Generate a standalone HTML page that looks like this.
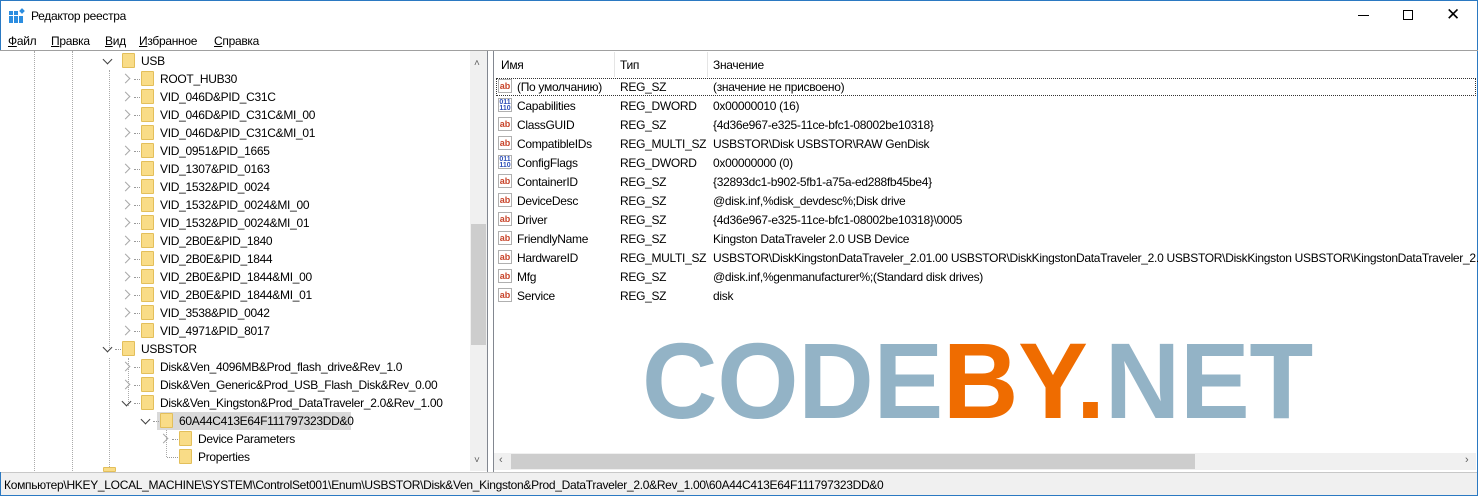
<!DOCTYPE html>
<html><head><meta charset="utf-8"><style>
*{margin:0;padding:0;box-sizing:border-box}
body{width:1478px;height:496px;overflow:hidden;background:#fff;font-family:"Liberation Sans","Noto Sans CJK SC",sans-serif;font-size:12px;color:#000;position:relative;letter-spacing:-0.3px}
.a{position:absolute;white-space:nowrap}
.f{position:absolute;width:13px;height:15px;background:#f9dc87;border:1px solid #e3bf5a;border-radius:1px}
.cv{position:absolute;width:7px;height:7px;border-right:1.5px solid #a8a8a8;border-bottom:1.5px solid #a8a8a8;transform:rotate(-45deg)}
.cd{position:absolute;width:7px;height:7px;border-right:1.5px solid #404040;border-bottom:1.5px solid #404040;transform:rotate(45deg)}
.dot{position:absolute;width:6px;border-top:1px dotted #999}
.vl{position:absolute;border-left:1px dotted #aaa}
.ic{position:absolute;width:14px;height:14px;border:1px solid #b0b0b0;background:#fff;font:bold 9px "Liberation Sans",sans-serif;line-height:12px;text-align:center;letter-spacing:0}
.ab{color:#c8442a}
.bn{color:#2d4fb8;font-size:7px;line-height:6px;padding-top:1px}
</style></head><body>
<div class="a" style="left:0;top:0;width:1478px;height:496px;border:1px solid #2b79c2"></div>
<svg class="a" style="left:9px;top:8px" width="16" height="16"><g fill="#2b8de0"><rect x="0" y="3" width="4" height="4"/><rect x="5" y="3" width="4" height="4"/><rect x="0" y="8" width="4" height="4"/><rect x="5" y="8" width="4" height="4"/><rect x="10" y="8" width="4" height="4"/><rect x="0" y="12" width="4" height="3"/><rect x="5" y="12" width="4" height="3"/><rect x="10" y="12" width="4" height="3"/><rect x="11" y="1" width="4" height="4" transform="rotate(45 13 3)"/></g></svg>
<div class="a" style="left:31px;top:9px;font-size:12px">Редактор реестра</div>
<div class="a" style="left:1358px;top:15px;width:11px;border-top:1px solid #000"></div>
<div class="a" style="left:1403px;top:10px;width:10px;height:10px;border:1px solid #000"></div>
<div class="a" style="left:1446px;top:6px;font-size:17px;line-height:17px">✕</div>
<div class="a" style="left:8px;top:34px"><u>Ф</u>айл</div>
<div class="a" style="left:51px;top:34px"><u>П</u>равка</div>
<div class="a" style="left:105px;top:34px"><u>В</u>ид</div>
<div class="a" style="left:139px;top:34px"><u>И</u>збранное</div>
<div class="a" style="left:214px;top:34px"><u>С</u>правка</div>
<div class="a" style="left:0;top:50px;width:1478px;border-top:1px solid #a0a0a0"></div>
<div class="a" style="left:0;top:51px;width:488px;height:421px;border-right:1px solid #828790;background:#fff"></div>
<div class="vl" style="left:34px;top:51px;height:420px"></div>
<div class="vl" style="left:72px;top:51px;height:420px"></div>
<div class="vl" style="left:109px;top:70px;height:280px"></div>
<div class="vl" style="left:109px;top:358px;height:113px"></div>
<div class="vl" style="left:128px;top:358px;height:48px"></div>
<div class="vl" style="left:166px;top:430px;height:27px"></div>
<div class="a" style="left:470px;top:51px;width:17px;height:420px;background:#f0f0f0"></div>
<div class="a" style="left:471px;top:224px;width:15px;height:121px;background:#cdcdcd"></div>
<div class="a" style="left:474px;top:58px;font-size:10px;color:#606060">˄</div>
<div class="a" style="left:474px;top:455px;font-size:10px;color:#606060">˅</div>
<div class="cd" style="left:104px;top:56px"></div><div class="f" style="left:122px;top:53px"></div><div class="a" style="left:141px;top:54px">USB</div>
<div class="cv" style="left:122px;top:75px"></div><div class="dot" style="left:134px;top:79px"></div><div class="f" style="left:141px;top:71px"></div><div class="a" style="left:160px;top:72px">ROOT_HUB30</div>
<div class="cv" style="left:122px;top:93px"></div><div class="dot" style="left:134px;top:97px"></div><div class="f" style="left:141px;top:89px"></div><div class="a" style="left:160px;top:90px">VID_046D&amp;PID_C31C</div>
<div class="cv" style="left:122px;top:111px"></div><div class="dot" style="left:134px;top:115px"></div><div class="f" style="left:141px;top:107px"></div><div class="a" style="left:160px;top:108px">VID_046D&amp;PID_C31C&amp;MI_00</div>
<div class="cv" style="left:122px;top:129px"></div><div class="dot" style="left:134px;top:133px"></div><div class="f" style="left:141px;top:125px"></div><div class="a" style="left:160px;top:126px">VID_046D&amp;PID_C31C&amp;MI_01</div>
<div class="cv" style="left:122px;top:147px"></div><div class="dot" style="left:134px;top:151px"></div><div class="f" style="left:141px;top:143px"></div><div class="a" style="left:160px;top:144px">VID_0951&amp;PID_1665</div>
<div class="cv" style="left:122px;top:165px"></div><div class="dot" style="left:134px;top:169px"></div><div class="f" style="left:141px;top:161px"></div><div class="a" style="left:160px;top:162px">VID_1307&amp;PID_0163</div>
<div class="cv" style="left:122px;top:183px"></div><div class="dot" style="left:134px;top:187px"></div><div class="f" style="left:141px;top:179px"></div><div class="a" style="left:160px;top:180px">VID_1532&amp;PID_0024</div>
<div class="cv" style="left:122px;top:201px"></div><div class="dot" style="left:134px;top:205px"></div><div class="f" style="left:141px;top:197px"></div><div class="a" style="left:160px;top:198px">VID_1532&amp;PID_0024&amp;MI_00</div>
<div class="cv" style="left:122px;top:219px"></div><div class="dot" style="left:134px;top:223px"></div><div class="f" style="left:141px;top:215px"></div><div class="a" style="left:160px;top:216px">VID_1532&amp;PID_0024&amp;MI_01</div>
<div class="cv" style="left:122px;top:237px"></div><div class="dot" style="left:134px;top:241px"></div><div class="f" style="left:141px;top:233px"></div><div class="a" style="left:160px;top:234px">VID_2B0E&amp;PID_1840</div>
<div class="cv" style="left:122px;top:255px"></div><div class="dot" style="left:134px;top:259px"></div><div class="f" style="left:141px;top:251px"></div><div class="a" style="left:160px;top:252px">VID_2B0E&amp;PID_1844</div>
<div class="cv" style="left:122px;top:273px"></div><div class="dot" style="left:134px;top:277px"></div><div class="f" style="left:141px;top:269px"></div><div class="a" style="left:160px;top:270px">VID_2B0E&amp;PID_1844&amp;MI_00</div>
<div class="cv" style="left:122px;top:291px"></div><div class="dot" style="left:134px;top:295px"></div><div class="f" style="left:141px;top:287px"></div><div class="a" style="left:160px;top:288px">VID_2B0E&amp;PID_1844&amp;MI_01</div>
<div class="cv" style="left:122px;top:309px"></div><div class="dot" style="left:134px;top:313px"></div><div class="f" style="left:141px;top:305px"></div><div class="a" style="left:160px;top:306px">VID_3538&amp;PID_0042</div>
<div class="cv" style="left:122px;top:327px"></div><div class="dot" style="left:134px;top:331px"></div><div class="f" style="left:141px;top:323px"></div><div class="a" style="left:160px;top:324px">VID_4971&amp;PID_8017</div>
<div class="cd" style="left:104px;top:344px"></div><div class="dot" style="left:115px;top:349px"></div><div class="f" style="left:122px;top:341px"></div><div class="a" style="left:141px;top:342px">USBSTOR</div>
<div class="cv" style="left:122px;top:363px"></div><div class="dot" style="left:134px;top:367px"></div><div class="f" style="left:141px;top:359px"></div><div class="a" style="left:160px;top:360px">Disk&amp;Ven_4096MB&amp;Prod_flash_drive&amp;Rev_1.0</div>
<div class="cv" style="left:122px;top:381px"></div><div class="dot" style="left:134px;top:385px"></div><div class="f" style="left:141px;top:377px"></div><div class="a" style="left:160px;top:378px">Disk&amp;Ven_Generic&amp;Prod_USB_Flash_Disk&amp;Rev_0.00</div>
<div class="cd" style="left:123px;top:398px"></div><div class="dot" style="left:134px;top:403px"></div><div class="f" style="left:141px;top:395px"></div><div class="a" style="left:160px;top:396px">Disk&amp;Ven_Kingston&amp;Prod_DataTraveler_2.0&amp;Rev_1.00</div>
<div class="a" style="left:157px;top:412px;width:194px;height:18px;background:#d9d9d9"></div>
<div class="cd" style="left:142px;top:416px"></div><div class="dot" style="left:153px;top:421px"></div><div class="f" style="left:160px;top:413px"></div><div class="a" style="left:179px;top:414px">60A44C413E64F111797323DD&amp;0</div>
<div class="cv" style="left:160px;top:435px"></div><div class="dot" style="left:172px;top:439px"></div><div class="f" style="left:179px;top:431px"></div><div class="a" style="left:198px;top:432px">Device Parameters</div>
<div class="dot" style="left:167px;top:457px;width:11px"></div><div class="f" style="left:179px;top:449px"></div><div class="a" style="left:198px;top:450px">Properties</div>
<div class="f" style="left:103px;top:467px;height:5px"></div>
<div class="a" style="left:493px;top:51px;width:984px;height:421px;border-left:1px solid #828790;background:#fff"></div>
<div class="a" style="left:501px;top:58px">Имя</div>
<div class="a" style="left:620px;top:58px">Тип</div>
<div class="a" style="left:713px;top:58px">Значение</div>
<div class="a" style="left:614px;top:52px;height:25px;border-left:1px solid #e5e5e5"></div>
<div class="a" style="left:707px;top:52px;height:25px;border-left:1px solid #e5e5e5"></div>
<div class="a" style="left:496px;top:78px;width:980px;height:18px;border:1px dotted #333"></div>
<div class="ic ab" style="left:498px;top:79px">ab</div><div class="a" style="left:517px;top:80px">(По умолчанию)</div><div class="a" style="left:620px;top:80px">REG_SZ</div><div class="a" style="left:713px;top:80px">(значение не присвоено)</div>
<div class="ic bn" style="left:498px;top:98px">011<br>110</div><div class="a" style="left:517px;top:99px">Capabilities</div><div class="a" style="left:620px;top:99px">REG_DWORD</div><div class="a" style="left:713px;top:99px">0x00000010 (16)</div>
<div class="ic ab" style="left:498px;top:117px">ab</div><div class="a" style="left:517px;top:118px">ClassGUID</div><div class="a" style="left:620px;top:118px">REG_SZ</div><div class="a" style="left:713px;top:118px">{4d36e967-e325-11ce-bfc1-08002be10318}</div>
<div class="ic ab" style="left:498px;top:136px">ab</div><div class="a" style="left:517px;top:137px">CompatibleIDs</div><div class="a" style="left:620px;top:137px">REG_MULTI_SZ</div><div class="a" style="left:713px;top:137px">USBSTOR\Disk USBSTOR\RAW GenDisk</div>
<div class="ic bn" style="left:498px;top:155px">011<br>110</div><div class="a" style="left:517px;top:156px">ConfigFlags</div><div class="a" style="left:620px;top:156px">REG_DWORD</div><div class="a" style="left:713px;top:156px">0x00000000 (0)</div>
<div class="ic ab" style="left:498px;top:174px">ab</div><div class="a" style="left:517px;top:175px">ContainerID</div><div class="a" style="left:620px;top:175px">REG_SZ</div><div class="a" style="left:713px;top:175px">{32893dc1-b902-5fb1-a75a-ed288fb45be4}</div>
<div class="ic ab" style="left:498px;top:193px">ab</div><div class="a" style="left:517px;top:194px">DeviceDesc</div><div class="a" style="left:620px;top:194px">REG_SZ</div><div class="a" style="left:713px;top:194px">@disk.inf,%disk_devdesc%;Disk drive</div>
<div class="ic ab" style="left:498px;top:212px">ab</div><div class="a" style="left:517px;top:213px">Driver</div><div class="a" style="left:620px;top:213px">REG_SZ</div><div class="a" style="left:713px;top:213px">{4d36e967-e325-11ce-bfc1-08002be10318}\0005</div>
<div class="ic ab" style="left:498px;top:231px">ab</div><div class="a" style="left:517px;top:232px">FriendlyName</div><div class="a" style="left:620px;top:232px">REG_SZ</div><div class="a" style="left:713px;top:232px">Kingston DataTraveler 2.0 USB Device</div>
<div class="ic ab" style="left:498px;top:250px">ab</div><div class="a" style="left:517px;top:251px">HardwareID</div><div class="a" style="left:620px;top:251px">REG_MULTI_SZ</div><div class="a" style="left:713px;top:251px">USBSTOR\DiskKingstonDataTraveler_2.01.00 USBSTOR\DiskKingstonDataTraveler_2.0 USBSTOR\DiskKingston USBSTOR\KingstonDataTraveler_2.01</div>
<div class="ic ab" style="left:498px;top:269px">ab</div><div class="a" style="left:517px;top:270px">Mfg</div><div class="a" style="left:620px;top:270px">REG_SZ</div><div class="a" style="left:713px;top:270px">@disk.inf,%genmanufacturer%;(Standard disk drives)</div>
<div class="ic ab" style="left:498px;top:288px">ab</div><div class="a" style="left:517px;top:289px">Service</div><div class="a" style="left:620px;top:289px">REG_SZ</div><div class="a" style="left:713px;top:289px">disk</div>
<div class="a" style="left:1476px;top:51px;height:421px;border-left:1px solid #fff"></div>
<svg class="a" style="left:630px;top:330px" width="700" height="100"><text x="12" y="88" font-family="Liberation Sans,sans-serif" font-weight="bold" font-size="108" textLength="671" lengthAdjust="spacingAndGlyphs"><tspan fill="#93b3c6">CODE</tspan><tspan fill="#ef6c00">BY.</tspan><tspan fill="#93b3c6">NET</tspan></text></svg>
<div class="a" style="left:494px;top:453px;width:982px;height:17px;background:#f0f0f0"></div>
<div class="a" style="left:511px;top:454px;width:684px;height:15px;background:#cdcdcd"></div>
<div class="a" style="left:499px;top:454px;font-size:11px;color:#606060">‹</div>
<div class="a" style="left:1465px;top:454px;font-size:11px;color:#606060">›</div>
<div class="a" style="left:1px;top:472px;width:1476px;height:23px;background:#f0f0f0;border-top:1px solid #c8c8c8"></div>
<div class="a" style="left:4px;top:478px">Компьютер\HKEY_LOCAL_MACHINE\SYSTEM\ControlSet001\Enum\USBSTOR\Disk&amp;Ven_Kingston&amp;Prod_DataTraveler_2.0&amp;Rev_1.00\60A44C413E64F111797323DD&amp;0</div>
</body></html>
